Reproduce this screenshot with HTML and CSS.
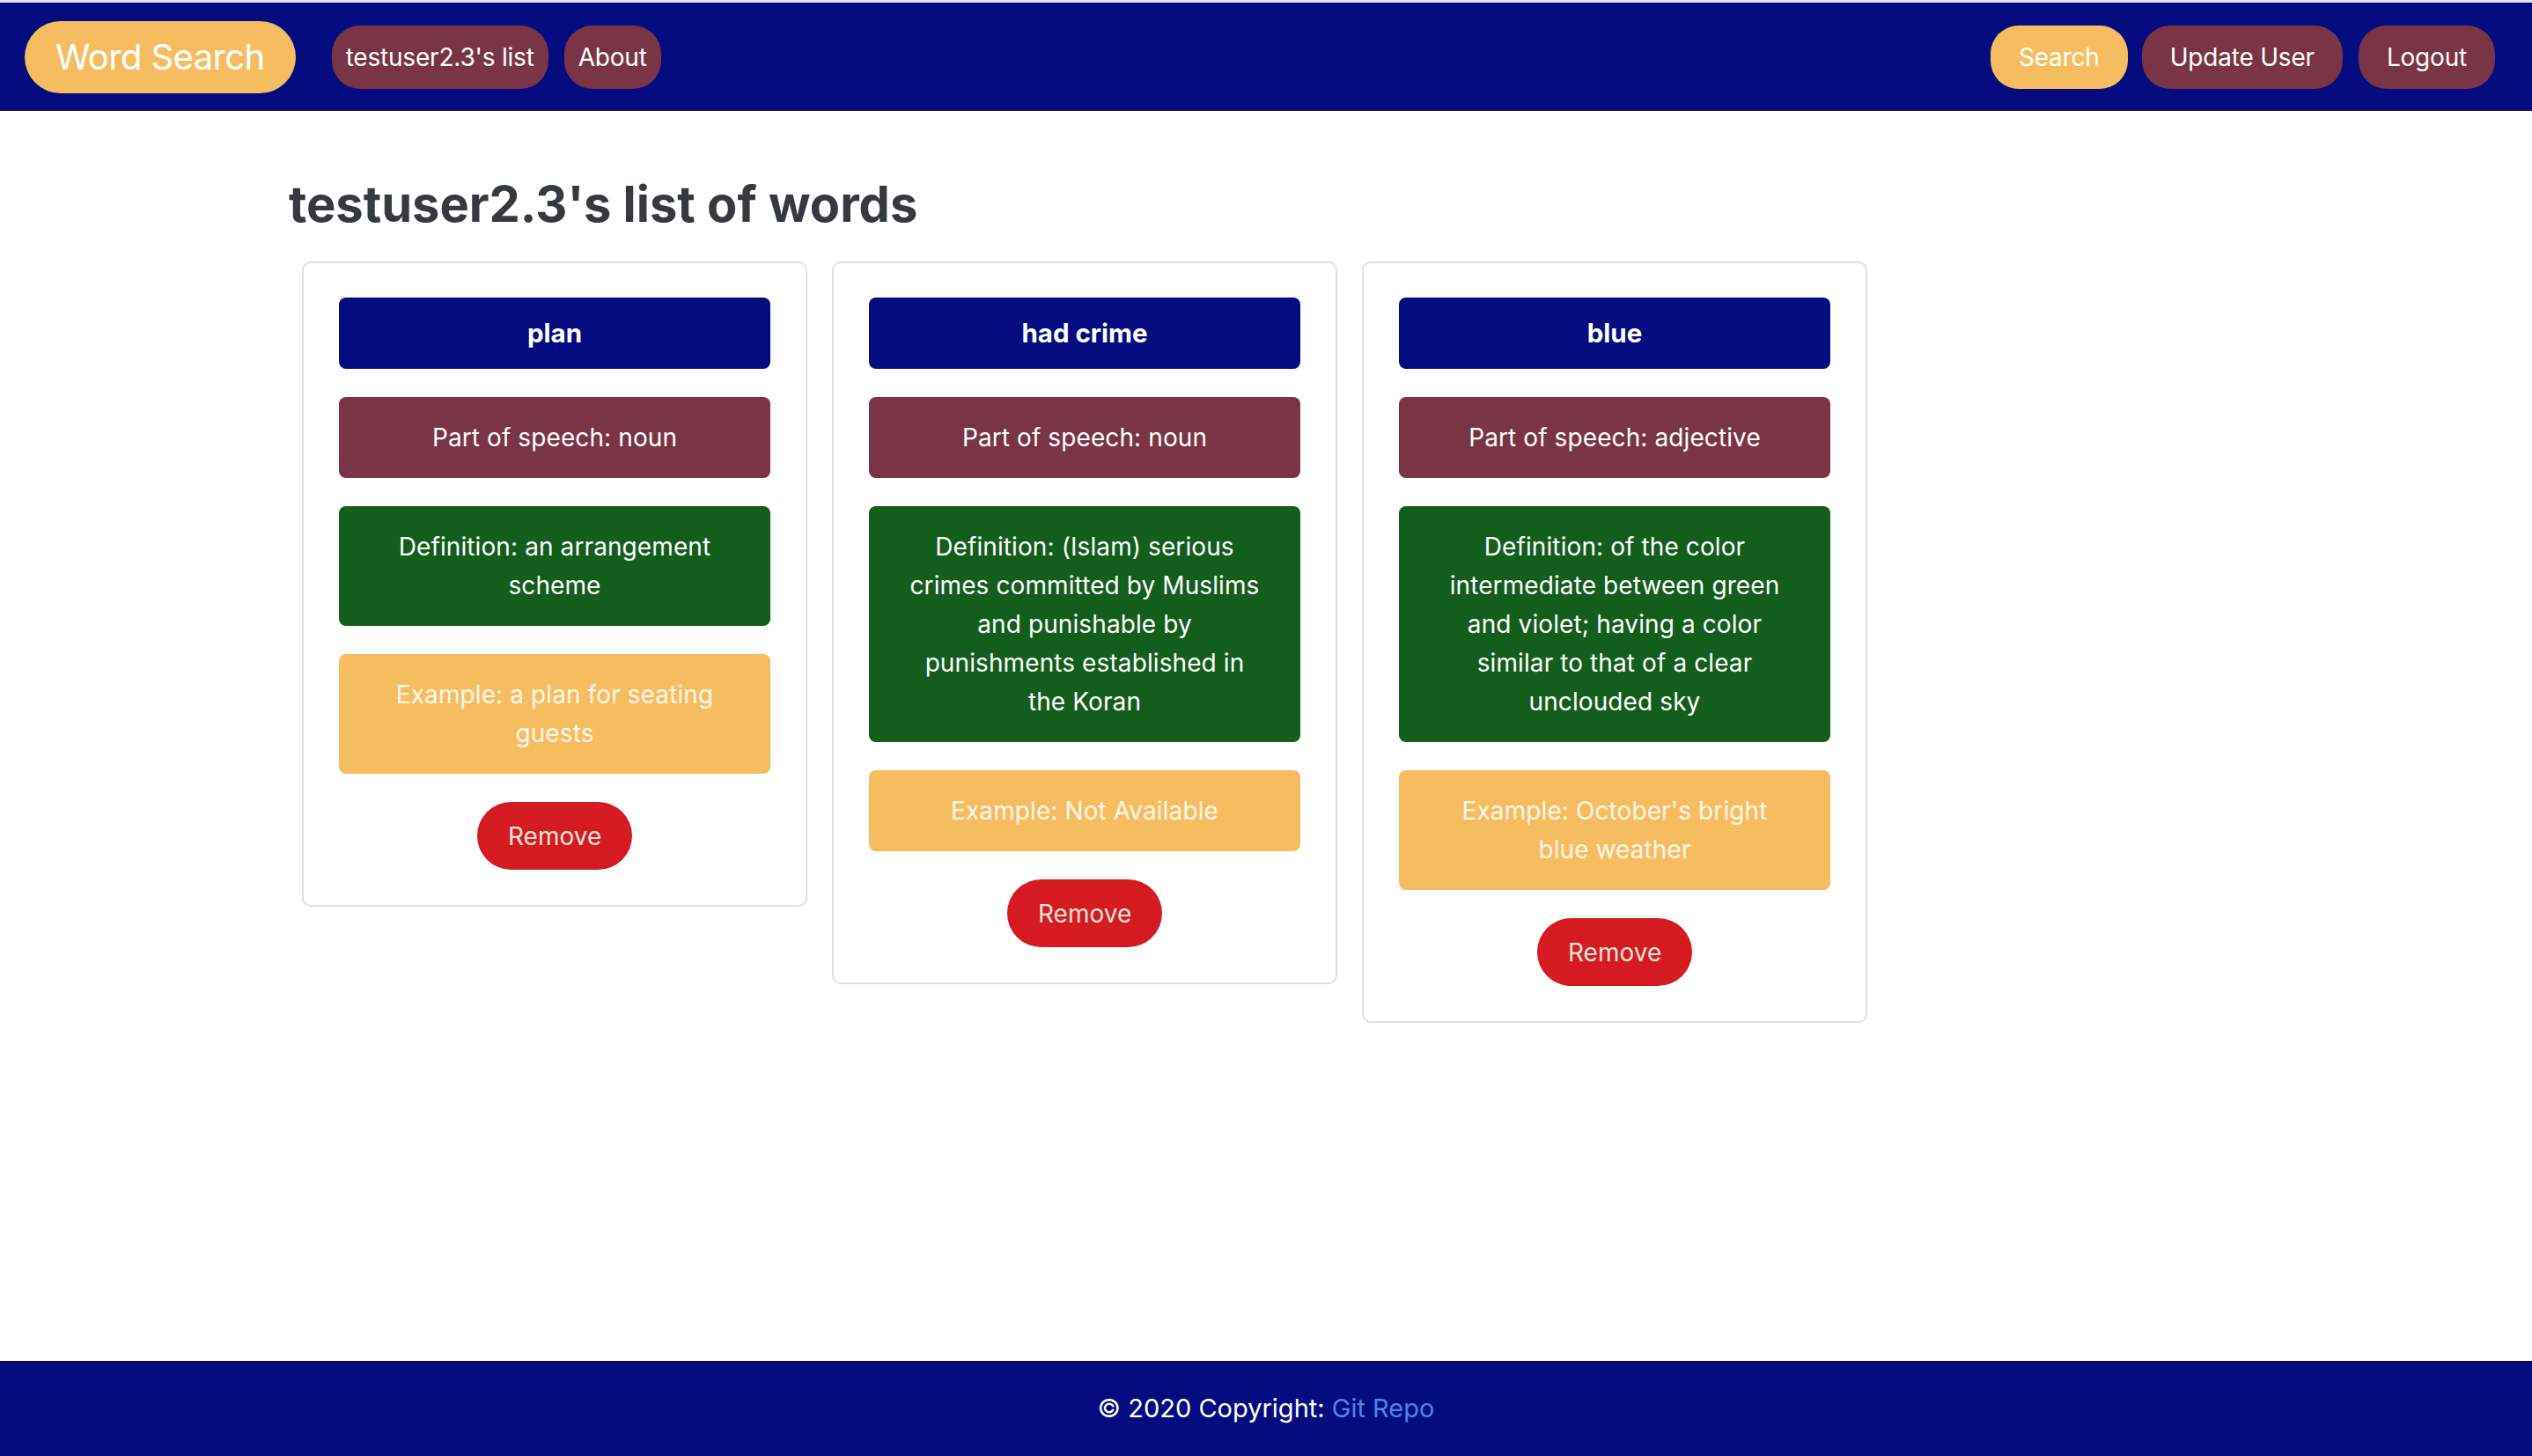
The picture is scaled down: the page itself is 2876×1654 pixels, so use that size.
FILE: index.html
```html
<!DOCTYPE html>
<html lang="en">
<head>
<meta charset="utf-8">
<title>Word Search</title>
<link rel="stylesheet" href="styles.css">
</head>
<body>
<nav class="navbar">
  <a class="brand" href="#">Word Search</a>
  <a class="nav-btn maroon first" href="#">testuser2.3's list</a>
  <a class="nav-btn maroon" href="#">About</a>
  <div class="nav-right">
    <a class="nav-btn wide yellow" href="#">Search</a>
    <a class="nav-btn wide maroon" href="#">Update User</a>
    <a class="nav-btn wide maroon" href="#">Logout</a>
  </div>
</nav>

<main class="container">
  <h3 class="title">testuser2.3's list of words</h3>
  <div class="cards">
    <div class="card">
      <div class="box word">plan</div>
      <div class="box pos">Part of speech: noun</div>
      <div class="box def">Definition: an arrangement scheme</div>
      <div class="box ex">Example: a plan for seating guests</div>
      <button class="remove">Remove</button>
    </div>
    <div class="card">
      <div class="box word">had crime</div>
      <div class="box pos">Part of speech: noun</div>
      <div class="box def">Definition: (Islam) serious crimes committed by Muslims and punishable by punishments established in the Koran</div>
      <div class="box ex">Example: Not Available</div>
      <button class="remove">Remove</button>
    </div>
    <div class="card">
      <div class="box word">blue</div>
      <div class="box pos">Part of speech: adjective</div>
      <div class="box def">Definition: of the color intermediate between green and violet; having a color similar to that of a clear unclouded sky</div>
      <div class="box ex">Example: October's bright blue weather</div>
      <button class="remove">Remove</button>
    </div>
  </div>
</main>

<footer class="footer">
  <span>© 2020 Copyright: <a class="repo" href="#">Git Repo</a></span>
</footer>
</body>
</html>
```

FILE: styles.css
```css
* { box-sizing: border-box; }

html, body { margin: 0; padding: 0; }

body {
  font-family: Inter, "Noto Sans", "Liberation Sans", sans-serif;
  font-size: 28px;
  line-height: 44px;
  color: #212529;
  background: #ffffff;
  min-height: 100vh;
  display: flex;
  flex-direction: column;
}

a { text-decoration: none; }

.navbar {
  background: #040c7f;
  border-top: 3px solid #dde0e7;
  height: 126px;
  display: flex;
  align-items: center;
  padding: 0 42px 0 28px;
}

.brand {
  background: #f6bd60;
  color: #ffffff;
  font-size: 40px;
  line-height: 60px;
  letter-spacing: -0.6px;
  padding: 11px 35px;
  border-radius: 41px;
  margin-right: 41px;
}

.nav-btn {
  color: #ffffff;
  font-size: 28px;
  line-height: 42px;
  letter-spacing: -0.2px;
  padding: 15px 16px;
  border-radius: 32px;
  margin-right: 18px;
}

.nav-btn.wide { padding: 15px 32px; }
.nav-right .nav-btn:last-child { margin-right: 0; }
.nav-right .nav-btn.yellow { margin-right: 16px; }

.maroon { background: #793545; }
.yellow { background: #f6bd60; }

.nav-right {
  margin-left: auto;
  display: flex;
  align-items: center;
}

.container {
  width: 2220px;
  margin: 0 auto;
  padding-bottom: 60px;
}

.title {
  font-size: 56px;
  line-height: 67px;
  font-weight: 700;
  color: #343a40;
  margin: 73px 0 31px 0;
}

.cards {
  display: flex;
  align-items: flex-start;
  gap: 28px;
  padding-left: 15px;
}

.card {
  width: 574px;
  border: 2px solid #dfdfdf;
  border-radius: 10px;
  padding: 39px 40px 40px;
  display: flex;
  flex-direction: column;
  align-items: stretch;
}

.box {
  color: #ffffff;
  text-align: center;
  border-radius: 8px;
  padding: 24px 42px;
  margin-bottom: 32px;
  letter-spacing: 0.1px;
}

.word {
  background: #040c7f;
  font-size: 29.5px;
  font-weight: 700;
  line-height: 33px;
  letter-spacing: 0;
}

.pos { background: #793545; }
.def { background: #135d1d; }
.ex { background: #f6bd60; color: #fdf6ec; }

.remove {
  align-self: center;
  font-family: inherit;
  font-size: 28px;
  line-height: 44px;
  color: #f4e6d6;
  background: #d51a22;
  border: none;
  border-radius: 40px;
  padding: 16px 35px;
  width: 176px;
  height: 77px;
}

.footer {
  margin-top: auto;
  background: #040c7f;
  height: 108px;
  display: flex;
  align-items: center;
  justify-content: center;
  color: #ffffff;
  font-size: 29px;
}

.repo { color: #4a86e8; }
```
